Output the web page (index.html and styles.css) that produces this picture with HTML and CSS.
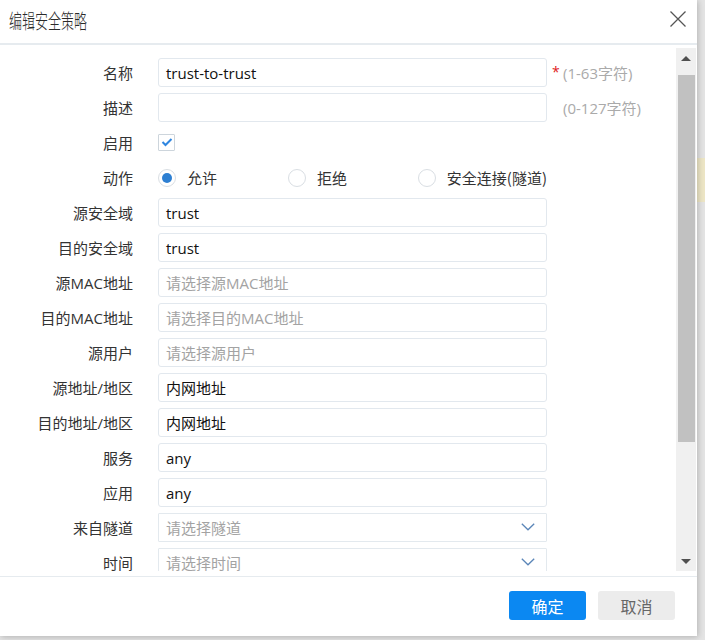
FILE: index.html
```html
<!DOCTYPE html>
<html lang="zh-CN">
<head>
<meta charset="utf-8">
<title>编辑安全策略</title>
<link rel="stylesheet" href="styles.css">
</head>
<body>
<div class="backdrop-note"></div>
<div class="dialog">
  <div class="header">
    <span class="title">编辑安全策略</span>
    <button class="close" aria-label="关闭">
      <svg width="16" height="16" viewBox="0 0 16 16"><path d="M0.5 0.5L15.5 15.5M15.5 0.5L0.5 15.5" stroke="#555" stroke-width="1.3" fill="none"/></svg>
    </button>
  </div>
  <div class="body">
    <div class="form-area">
      <div class="form">
        <div class="label">名称</div>
        <div class="field"><div class="input">trust-to-trust</div></div>
        <div class="hint"><span class="req">*</span>(1-63字符)</div>

        <div class="label">描述</div>
        <div class="field"><div class="input"></div></div>
        <div class="hint"><span class="req blank">*</span>(0-127字符)</div>

        <div class="label">启用</div>
        <div class="field"><span class="checkbox"><svg width="12" height="10" viewBox="0 0 12 10"><path d="M1.5 5L4.5 8L10.5 2" stroke="#2f86e0" stroke-width="2" fill="none"/></svg></span></div>
        <div class="hint"></div>

        <div class="label">动作</div>
        <div class="field radios">
          <span class="radio-opt r1"><span class="radio on"></span>允许</span>
          <span class="radio-opt r2"><span class="radio"></span>拒绝</span>
          <span class="radio-opt r3"><span class="radio"></span>安全连接(隧道)</span>
        </div>
        <div class="hint"></div>

        <div class="label">源安全域</div>
        <div class="field"><div class="input">trust</div></div>
        <div class="hint"></div>

        <div class="label">目的安全域</div>
        <div class="field"><div class="input">trust</div></div>
        <div class="hint"></div>

        <div class="label">源MAC地址</div>
        <div class="field"><div class="input ph">请选择源MAC地址</div></div>
        <div class="hint"></div>

        <div class="label">目的MAC地址</div>
        <div class="field"><div class="input ph">请选择目的MAC地址</div></div>
        <div class="hint"></div>

        <div class="label">源用户</div>
        <div class="field"><div class="input ph">请选择源用户</div></div>
        <div class="hint"></div>

        <div class="label">源地址/地区</div>
        <div class="field"><div class="input">内网地址</div></div>
        <div class="hint"></div>

        <div class="label">目的地址/地区</div>
        <div class="field"><div class="input">内网地址</div></div>
        <div class="hint"></div>

        <div class="label">服务</div>
        <div class="field"><div class="input">any</div></div>
        <div class="hint"></div>

        <div class="label">应用</div>
        <div class="field"><div class="input">any</div></div>
        <div class="hint"></div>

        <div class="label">来自隧道</div>
        <div class="field"><div class="input select ph">请选择隧道<svg class="chev" width="14" height="8" viewBox="0 0 14 8"><path d="M0.8 0.8L7 6.8L13.2 0.8" stroke="#5b86b8" stroke-width="1.3" fill="none"/></svg></div></div>
        <div class="hint"></div>

        <div class="label">时间</div>
        <div class="field"><div class="input select ph">请选择时间<svg class="chev" width="14" height="8" viewBox="0 0 14 8"><path d="M0.8 0.8L7 6.8L13.2 0.8" stroke="#5b86b8" stroke-width="1.3" fill="none"/></svg></div></div>
        <div class="hint"></div>
      </div>
    </div>
    <div class="scrollbar">
      <div class="arrow up"></div>
      <div class="thumb-wrap"><div class="thumb"></div></div>
      <div class="arrow down"></div>
    </div>
  </div>
  <div class="footer">
    <button class="btn primary">确定</button>
    <button class="btn">取消</button>
  </div>
</div>
</body>
</html>
```

FILE: styles.css
```css
html, body {
  margin: 0;
  padding: 0;
}
body {
  width: 705px;
  height: 640px;
  background: #e4e4e4;
  position: relative;
  overflow: hidden;
  font-family: "Open Sans", "Noto Sans CJK SC", sans-serif;
  color: #333;
}
.backdrop-note {
  position: absolute;
  left: 697px;
  top: 158px;
  width: 8px;
  height: 44px;
  background: #ede6c6;
}
.dialog {
  position: relative;
  width: 697px;
  height: 636px;
  background: #fff;
  box-shadow: 1px 1px 6px rgba(0, 0, 0, 0.22);
  display: flex;
  flex-direction: column;
}
.header {
  box-sizing: border-box;
  height: 45px;
  border-bottom: 2px solid #e6ebef;
  display: flex;
  align-items: center;
  justify-content: space-between;
  padding: 0 11px 0 9px;
  flex: none;
}
.title {
  display: inline-block;
  font-family: "Noto Sans CJK SC", sans-serif;
  font-size: 20px;
  font-weight: 300;
  color: #2a2a2a;
  transform: scaleX(0.65);
  transform-origin: left center;
  margin-top: -2px;
  white-space: nowrap;
}
.close {
  border: 0;
  background: transparent;
  padding: 0;
  width: 16px;
  height: 16px;
  display: flex;
  margin-top: -5px;
}
.body {
  flex: 1;
  display: flex;
  padding: 3px 1px 5px 0;
  min-height: 0;
}
.form-area {
  flex: 1;
  overflow: hidden;
  padding-top: 10px;
}
.form {
  display: grid;
  grid-template-columns: 133px 389px 1fr;
  row-gap: 6px;
  grid-auto-rows: 29px;
}
.label {
  font-family: "Open Sans", "Noto Sans CJK SC", sans-serif;
  font-size: 15px;
  color: #333;
  white-space: nowrap;
  display: flex;
  align-items: center;
  justify-content: flex-end;
}
.field {
  margin-left: 25px;
  margin-right: -25px;
  display: flex;
  align-items: center;
  min-width: 0;
}
.input {
  box-sizing: border-box;
  width: 389px;
  height: 29px;
  border: 1px solid #e2e8ee;
  border-radius: 3px;
  padding: 0 7px;
  font-size: 15px;
  color: #111;
  display: flex;
  align-items: center;
  font-family: "Open Sans", "Noto Sans CJK SC", sans-serif;
  flex: none;
}
.input.ph {
  color: #a3a3a3;
}
.input.select {
  border-radius: 1px;
  border: 1.5px solid #e3e9ee;
  justify-content: space-between;
  padding-right: 11px;
}
.chev {
  display: block;
  margin-top: -2px;
}
.hint {
  margin-left: 25px;
  display: flex;
  align-items: center;
  white-space: nowrap;
  font-family: "Open Sans", "Noto Sans CJK SC", sans-serif;
  font-size: 15px;
  color: #aaa;
  padding-left: 5px;
}
.req {
  color: #e02020;
  width: 11px;
  font-size: 14px;
  margin-top: -2px;
}
.req.blank {
  visibility: hidden;
}
.checkbox {
  box-sizing: border-box;
  width: 17px;
  height: 17px;
  border: 1px solid #cdd5dc;
  border-radius: 1px;
  display: flex;
  align-items: center;
  justify-content: center;
  margin-top: -1px;
}
.radios {
  font-family: "Noto Sans CJK SC", sans-serif;
  font-size: 15px;
  color: #333;
  white-space: nowrap;
}
.radio-opt {
  display: inline-flex;
  align-items: center;
  gap: 11px;
}
.r1 { width: 131px; }
.r2 { width: 131px; }
.radio {
  box-sizing: border-box;
  width: 18px;
  height: 18px;
  border-radius: 50%;
  border: 1px solid #d9dee3;
  display: inline-flex;
  align-items: center;
  justify-content: center;
}
.radio.on::after {
  content: "";
  width: 10px;
  height: 10px;
  border-radius: 50%;
  background: #2d7fd2;
}
.scrollbar {
  width: 20px;
  background: #f0f0f0;
  display: flex;
  flex-direction: column;
  flex: none;
}
.arrow {
  height: 20px;
  display: flex;
  align-items: center;
  justify-content: center;
  flex: none;
}
.arrow.up::after {
  content: "";
  border-left: 5px solid transparent;
  border-right: 5px solid transparent;
  border-bottom: 5px solid #505050;
}
.arrow.down::after {
  content: "";
  border-left: 5px solid transparent;
  border-right: 5px solid transparent;
  border-top: 5px solid #505050;
}
.thumb-wrap {
  flex: 1;
  padding: 7px 1px 0 2px;
}
.thumb {
  height: 367px;
  background: #c1c1c1;
}
.footer {
  box-sizing: border-box;
  flex: none;
  height: 60px;
  border-top: 1.5px solid #e6ebef;
  display: flex;
  justify-content: flex-end;
  align-items: flex-start;
  padding: 14px 22px 0 0;
  gap: 12px;
}
.btn {
  width: 77px;
  height: 29px;
  border: 0;
  border-radius: 3px;
  background: #ececec;
  color: #666;
  font-family: "Noto Sans CJK SC", sans-serif;
  font-size: 16px;
  padding: 0;
}
.btn.primary {
  background: #0b88f2;
  color: #fff;
}
```
